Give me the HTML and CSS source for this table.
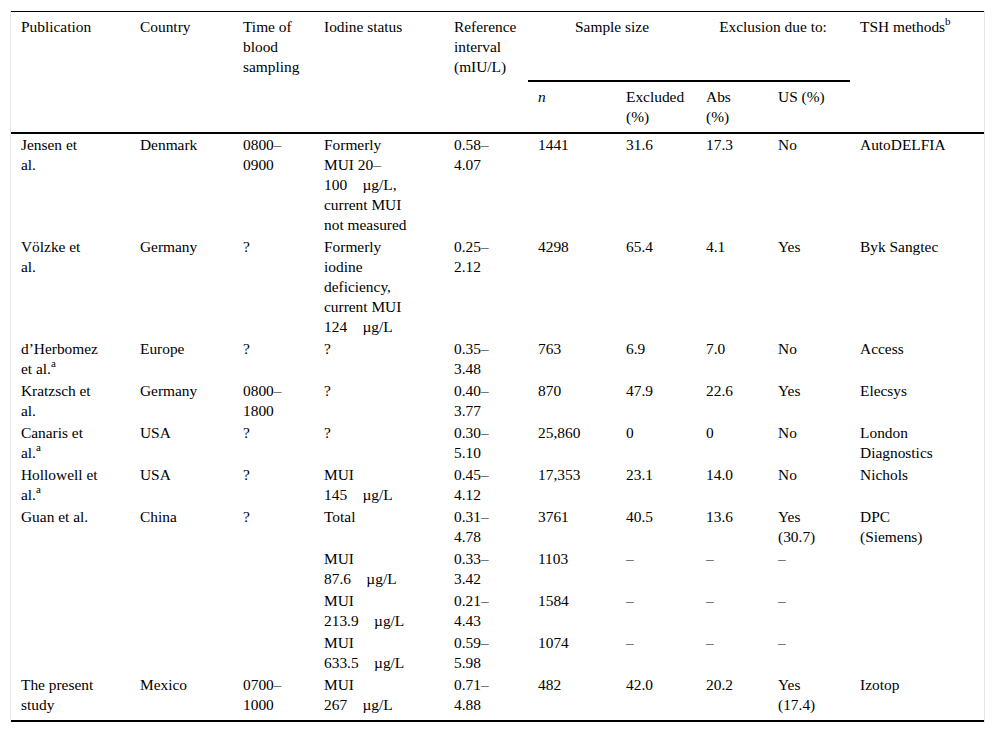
FILE: index.html
```html
<!DOCTYPE html>
<html lang="en">
<head>
<meta charset="utf-8">
<title>TSH reference intervals</title>
<link rel="stylesheet" href="styles.css">
</head>
<body>
<table class="data-table">
  <colgroup>
    <col class="c-pub"><col class="c-country"><col class="c-time"><col class="c-iodine"><col class="c-ref">
    <col class="c-n"><col class="c-excl"><col class="c-abs"><col class="c-us"><col class="c-tsh">
  </colgroup>
  <thead>
    <tr class="head-top">
      <th rowspan="2">Publication</th>
      <th rowspan="2">Country</th>
      <th rowspan="2">Time of<br>blood<br>sampling</th>
      <th rowspan="2">Iodine status</th>
      <th rowspan="2">Reference<br>interval<br>(mIU/L)</th>
      <th colspan="2" class="group">Sample size</th>
      <th colspan="2" class="group">Exclusion due to:</th>
      <th rowspan="2">TSH methods<sup>b</sup></th>
    </tr>
    <tr class="head-sub">
      <th><i>n</i></th>
      <th>Excluded<br>(%)</th>
      <th>Abs<br>(%)</th>
      <th>US (%)</th>
    </tr>
  </thead>
  <tbody>
    <tr>
      <td>Jensen et<br>al.</td><td>Denmark</td><td>0800–<br>0900</td>
      <td>Formerly<br>MUI 20–<br>100&emsp;µg/L,<br>current MUI<br>not measured</td>
      <td>0.58–<br>4.07</td><td>1441</td><td>31.6</td><td>17.3</td><td>No</td><td>AutoDELFIA</td>
    </tr>
    <tr>
      <td>Völzke et<br>al.</td><td>Germany</td><td>?</td>
      <td>Formerly<br>iodine<br>deficiency,<br>current MUI<br>124&emsp;µg/L</td>
      <td>0.25–<br>2.12</td><td>4298</td><td>65.4</td><td>4.1</td><td>Yes</td><td>Byk Sangtec</td>
    </tr>
    <tr>
      <td>d’Herbomez<br>et al.<sup>a</sup></td><td>Europe</td><td>?</td><td>?</td>
      <td>0.35–<br>3.48</td><td>763</td><td>6.9</td><td>7.0</td><td>No</td><td>Access</td>
    </tr>
    <tr>
      <td>Kratzsch et<br>al.</td><td>Germany</td><td>0800–<br>1800</td><td>?</td>
      <td>0.40–<br>3.77</td><td>870</td><td>47.9</td><td>22.6</td><td>Yes</td><td>Elecsys</td>
    </tr>
    <tr>
      <td>Canaris et<br>al.<sup>a</sup></td><td>USA</td><td>?</td><td>?</td>
      <td>0.30–<br>5.10</td><td>25,860</td><td>0</td><td>0</td><td>No</td><td>London<br>Diagnostics</td>
    </tr>
    <tr>
      <td>Hollowell et<br>al.<sup>a</sup></td><td>USA</td><td>?</td><td>MUI<br>145&emsp;µg/L</td>
      <td>0.45–<br>4.12</td><td>17,353</td><td>23.1</td><td>14.0</td><td>No</td><td>Nichols</td>
    </tr>
    <tr>
      <td>Guan et al.</td><td>China</td><td>?</td><td>Total</td>
      <td>0.31–<br>4.78</td><td>3761</td><td>40.5</td><td>13.6</td><td>Yes<br>(30.7)</td><td>DPC<br>(Siemens)</td>
    </tr>
    <tr>
      <td></td><td></td><td></td><td>MUI<br>87.6&emsp;µg/L</td>
      <td>0.33–<br>3.42</td><td>1103</td><td>–</td><td>–</td><td>–</td><td></td>
    </tr>
    <tr>
      <td></td><td></td><td></td><td>MUI<br>213.9&emsp;µg/L</td>
      <td>0.21–<br>4.43</td><td>1584</td><td>–</td><td>–</td><td>–</td><td></td>
    </tr>
    <tr>
      <td></td><td></td><td></td><td>MUI<br>633.5&emsp;µg/L</td>
      <td>0.59–<br>5.98</td><td>1074</td><td>–</td><td>–</td><td>–</td><td></td>
    </tr>
    <tr class="last-row">
      <td>The present<br>study</td><td>Mexico</td><td>0700–<br>1000</td><td>MUI<br>267&emsp;µg/L</td>
      <td>0.71–<br>4.88</td><td>482</td><td>42.0</td><td>20.2</td><td>Yes<br>(17.4)</td><td>Izotop</td>
    </tr>
  </tbody>
</table>
</body>
</html>
```

FILE: styles.css
```css
html, body {
  margin: 0;
  padding: 0;
  background: #ffffff;
}

body {
  font-family: "Liberation Serif", "Tinos", "Times New Roman", Times, "DejaVu Serif", serif;
  font-size: 15.4px;
  line-height: 20px;
  color: #000000;
}

.data-table {
  margin: 11px 0 0 10px;
  width: 975px;
  table-layout: fixed;
  border-collapse: separate;
  border-spacing: 0;
  border-left: 1px solid #e6e6e6;
  border-right: 1px solid #e6e6e6;
  font-family: inherit;
  font-size: inherit;
}

.c-pub { width: 119px; }
.c-country { width: 103px; }
.c-time { width: 81px; }
.c-iodine { width: 130px; }
.c-ref { width: 84px; }
.c-n { width: 88px; }
.c-excl { width: 80px; }
.c-abs { width: 72px; }
.c-us { width: 82px; }
.c-tsh { width: 134px; }

.data-table th,
.data-table td {
  padding: 1px 10px;
  text-align: left;
  vertical-align: top;
  font-weight: normal;
  white-space: nowrap;
}

.head-top th {
  padding-top: 5px;
  padding-bottom: 5px;
  border-top: 1px solid #000000;
  border-bottom: 2px solid #000000;
}

.head-top th.group {
  text-align: center;
  padding-bottom: 43px;
}

.head-sub th {
  padding-top: 5px;
  padding-bottom: 5px;
  border-bottom: 2px solid #000000;
}

.last-row td {
  padding-bottom: 5px;
  border-bottom: 2px solid #000000;
}

sup {
  font-size: 11px;
  line-height: 0;
  vertical-align: 7px;
}
```
